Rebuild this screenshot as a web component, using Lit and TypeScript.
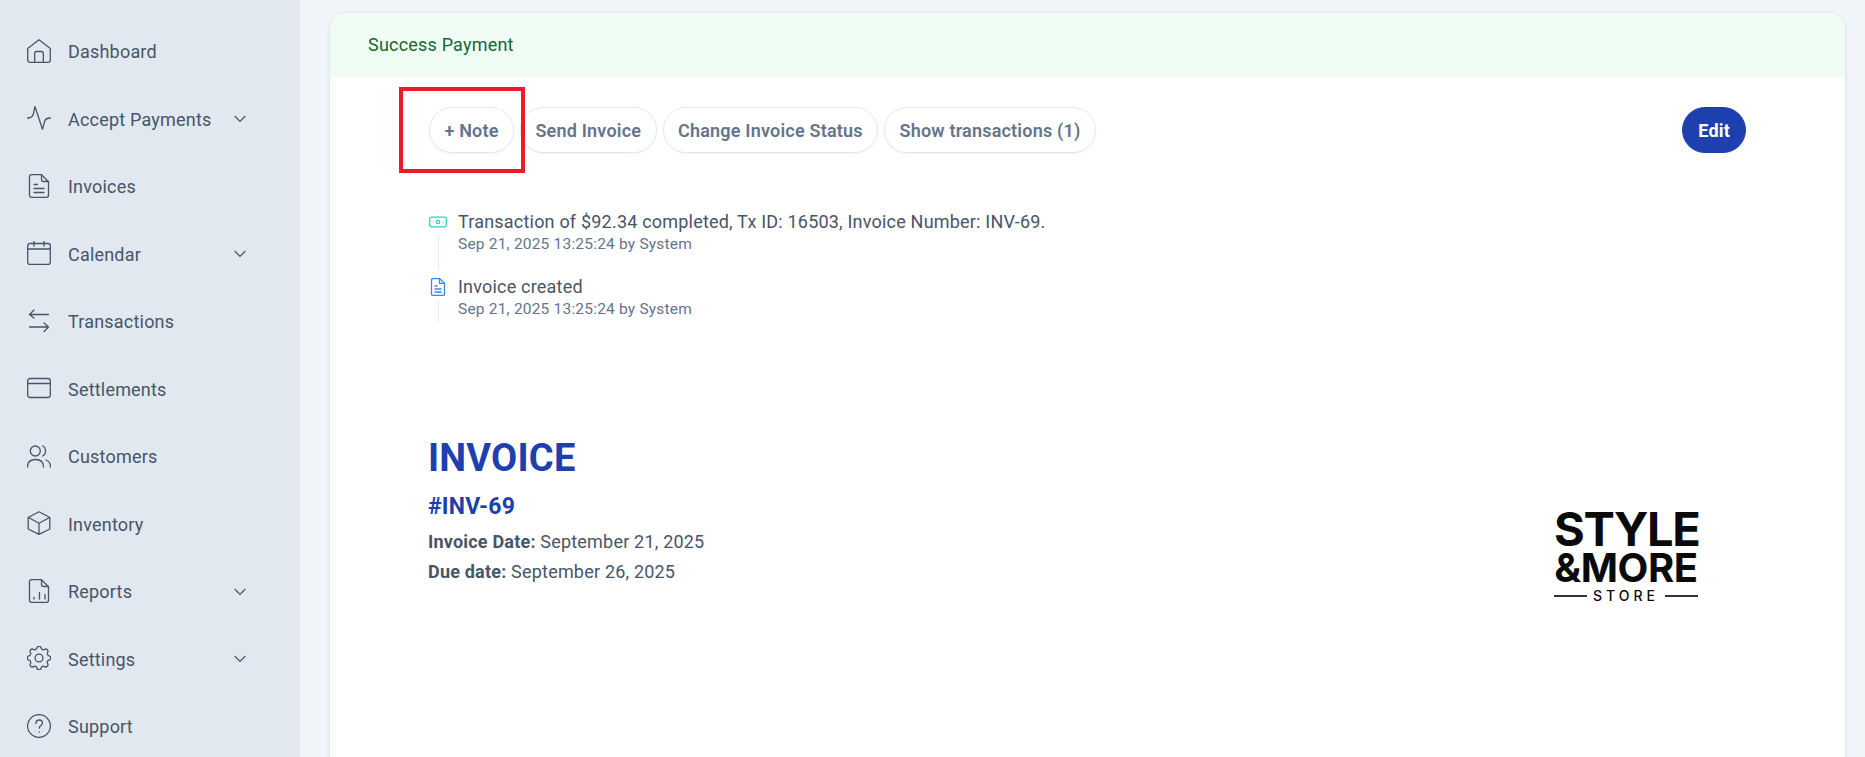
import { LitElement, html, css, svg } from "lit";
import { customElement } from "lit/decorators.js";

const icons: Record<string, unknown> = {
  home: svg`<path d="M.7 9.500 12 .7l11.300 8.800V21a2.300 2.300 0 0 1-2.300 2.300H3A2.300 2.300 0 0 1 .7 21Z"/><path d="M7.700 23.300V14.500a2 2 0 0 1 2-2h4.600a2 2 0 0 1 2 2v8.800"/>`,
  activity: svg`<path d="M.5 12c3 0 5-1 5.800-4L8 .7l7.500 22.600 2.300-8.300c.5-2 1.500-3 5.700-3"/>`,
  doc: svg`<path d="M2.500 2.700A2 2 0 0 1 4.500 .7h10l7 7V21.300a2 2 0 0 1-2 2h-15a2 2 0 0 1-2-2Z"/><path d="M14.500 .7V5.500a2 2 0 0 0 2 2h5M7 10.500h3.500M7 14.500h10M7 18.500h10"/>`,
  calendar: svg`<rect x=".7" y="2.500" width="22.600" height="21" rx="2.200"/><path d="M.7 8h22.600M7 .5v4.500M17 .5v4.500"/>`,
  swap: svg`<path d="M21.500 5.500H2.500M7 1 2.500 5.500 7 9M2.500 18H21.500M17 14l4.500 4-4.500 4.500"/>`,
  card: svg`<rect x=".7" y="2.500" width="22.600" height="19" rx="2.500"/><path d="M.7 7.500h22.600"/>`,
  users: svg`<circle cx="8.300" cy="7" r="5"/><path d="M.5 23c0-5 3-7.500 8-7.500s8 2.500 8 7.500M15.500 2c2 .7 3 2.700 3 5s-1 4.300-3 5M19 16c2.800 1 4.500 3.500 4.500 7"/>`,
  box: svg`<path d="m12 .7 10.800 5.800v11.500L12 23.300 1.200 18V6.500ZM1.500 6.500 12 12.300l10.500-5.800M12 12.300v11"/>`,
  report: svg`<path d="M2.500 2.700A2 2 0 0 1 4.500 .7h10l7 7V21.300a2 2 0 0 1-2 2h-15a2 2 0 0 1-2-2Z"/><path d="M14.500 .7V5.500a2 2 0 0 0 2 2h5M7 20v-1.500M12.500 20v-6.500M18 20v-4.500"/>`,
  gear: svg`<g transform="translate(12 12) scale(1.300) translate(-12 -12)" stroke-width="1"><path d="M10.325 4.317c.426 -1.756 2.924 -1.756 3.35 0a1.724 1.724 0 0 0 2.573 1.066c1.543 -.94 3.31 .826 2.37 2.37a1.724 1.724 0 0 0 1.065 2.572c1.756 .426 1.756 2.924 0 3.35a1.724 1.724 0 0 0 -1.066 2.573c.94 1.543 -.826 3.31 -2.37 2.37a1.724 1.724 0 0 0 -2.572 1.065c-.426 1.756 -2.924 1.756 -3.35 0a1.724 1.724 0 0 0 -2.573 -1.066c-1.543 .94 -3.31 -.826 -2.37 -2.370a1.724 1.724 0 0 0 -1.065 -2.572c-1.756 -.426 -1.756 -2.924 0 -3.350a1.724 1.724 0 0 0 1.066 -2.573c-.94 -1.543 .826 -3.310 2.370 -2.370c1 .608 2.296 .07 2.572 -1.065z"/><circle cx="12" cy="12" r="3"/></g>`,
  help: svg`<circle cx="12" cy="12" r="11.400"/><path d="M8.800 9.500c.2-2 1.600-3.500 3.400-3.500 1.900 0 3.300 1.300 3.300 3 0 2.400-3.300 2.700-3.300 5.200M12.200 17.800v.4"/>`,
};

const items: [string, string, boolean][] = [
  ["home", "Dashboard", false],
  ["activity", "Accept Payments", true],
  ["doc", "Invoices", false],
  ["calendar", "Calendar", true],
  ["swap", "Transactions", false],
  ["card", "Settlements", false],
  ["users", "Customers", false],
  ["box", "Inventory", false],
  ["report", "Reports", true],
  ["gear", "Settings", true],
  ["help", "Support", false],
];

@customElement("app-root")
export class AppRoot extends LitElement {
  static styles = css`
    :host {
      display: flex;
      position: relative;
      height: 757px;
      overflow: hidden;
      background: #f1f5f9;
      font-family: Roboto, "Liberation Sans", sans-serif;
      letter-spacing: 0.2px;
      color: #475569;
    }
    .side {
      flex: 0 0 300px;
      background: #e2e8f0;
      padding-top: 18px;
      box-sizing: border-box;
    }
    .item {
      height: 67.5px;
      display: flex;
      align-items: center;
      padding-left: 27px;
      font-size: 18px;
    }
    .item svg.i {
      width: 24px;
      height: 24px;
      margin-top: -2px;
      fill: none;
      stroke: #475569;
      stroke-width: 1.3;
      stroke-linecap: round;
      stroke-linejoin: round;
      flex: none;
    }
    .item span {
      margin-left: 17px;
      width: 166px;
      white-space: nowrap;
    }
    .chev {
      width: 12px;
      height: 8px;
      fill: none;
      stroke: #475569;
      stroke-width: 1.2;
    }
    .main {
      flex: 1;
      padding: 12px 19px 0 29px;
    }
    .card {
      background: #fff;
      border: 1px solid #e2e8f0;
      border-bottom: none;
      border-radius: 16px 16px 0 0;
      height: 800px;
      box-sizing: border-box;
      box-shadow: 0 1px 3px rgba(15, 23, 42, 0.06);
      overflow: hidden;
    }
    .alert {
      height: 64px;
      background: #f0fdf4;
      color: #166534;
      display: flex;
      align-items: center;
      padding: 0 0 2px 38px;
      font-size: 18px;
      box-sizing: border-box;
    }
    .body {
      padding: 30px 99px 0 99px;
    }
    .tools {
      display: flex;
      align-items: center;
      gap: 6px;
    }
    .btn {
      height: 46px;
      box-sizing: border-box;
      border: 1px solid #e2e8f0;
      border-radius: 23px;
      padding: 0 14.4px;
      display: flex;
      align-items: center;
      font-size: 18px;
      font-weight: 600;
      color: #64748b;
      background: #fff;
      box-shadow: 0 1px 2px rgba(15, 23, 42, 0.05);
      white-space: nowrap;
    }
    .btn.edit {
      margin-left: auto;
      padding: 0 15px;
      background: #1e40af;
      border-color: #1e40af;
      color: #fff;
      font-weight: 700;
    }
    .feed {
      margin-top: 58px;
    }
    .ev {
      height: 65px;
      display: flex;
      gap: 11px;
    }
    .ev .rail {
      width: 18px;
      display: flex;
      flex-direction: column;
      align-items: center;
    }
    .ev .rail svg {
      width: 18px;
      height: 18px;
      flex: none;
      margin-top: 2px;
      fill: none;
      stroke-width: 1.3;
      stroke-linejoin: round;
    }
    .ev .rail i {
      display: block;
      width: 1px;
      height: 35px;
      margin-top: 4px;
      background: #e2e8f0;
    }
    .ev .rail i.short {
      height: 22px;
    }
    .ev .t {
      font-size: 18px;
      line-height: 22px;
      color: #475569;
      white-space: nowrap;
    }
    .ev .s {
      font-size: 15.5px;
      line-height: 22px;
      color: #64748b;
      white-space: nowrap;
    }
    .head {
      margin-top: 94px;
      display: flex;
      justify-content: space-between;
      align-items: flex-start;
    }
    .info {
      margin-left: -1px;
    }
    h1 {
      margin: 0;
      font-size: 38px;
      line-height: 46px;
      font-weight: 700;
      color: #1e40af;
    }
    h2 {
      margin: 12px 0 0;
      font-size: 23px;
      line-height: 28px;
      font-weight: 700;
      color: #1e40af;
    }
    .meta {
      font-size: 18px;
      line-height: 30px;
      color: #475569;
    }
    .meta.first {
      margin-top: 6px;
    }
    .meta b {
      font-weight: 700;
    }
    .logo {
      width: 144px;
      margin: 74px 48px 0 0;
      color: #0a0a0a;
      font-family: Inter, sans-serif;
      text-align: center;
    }
    .logo div {
      white-space: nowrap;
    }
    .l1 {
      font-size: 47px;
      line-height: 40px;
      font-weight: 700;
      letter-spacing: -1.3px;
    }
    .l2 {
      font-size: 40px;
      line-height: 38px;
      font-weight: 700;
      letter-spacing: -0.4px;
      margin-left: -2px;
      margin-right: -2px;
    }
    .l3 {
      display: flex;
      align-items: center;
      gap: 6px;
      font-size: 14px;
      line-height: 18px;
      letter-spacing: 4px;
      font-weight: 500;
    }
    .l3 i {
      flex: 1;
      height: 1.5px;
      background: #333;
    }
    .mark {
      position: absolute;
      left: 399px;
      top: 87px;
      width: 126px;
      height: 86px;
      box-sizing: border-box;
      border: 4px solid #ed1c24;
      pointer-events: none;
    }
  `;

  render() {
    return html`
      <nav class="side">
        ${items.map(
          ([ic, label, more]) => html`<div class="item">
            <svg class="i" viewBox="0 0 24 24">${icons[ic]}</svg>
            <span>${label}</span>
            ${more
              ? html`<svg class="chev" viewBox="0 0 12 8"><path d="M.7 1 6 6.500 11.300 1" /></svg>`
              : ""}
          </div>`,
        )}
      </nav>
      <main class="main">
        <section class="card">
          <div class="alert">Success Payment</div>
          <div class="body">
            <div class="tools">
              <div class="btn">+ Note</div>
              <div class="btn">Send Invoice</div>
              <div class="btn">Change Invoice Status</div>
              <div class="btn">Show transactions (1)</div>
              <div class="btn edit">Edit</div>
            </div>
            <div class="feed">
              <div class="ev">
                <div class="rail">
                  <svg viewBox="0 0 18 18" stroke="#2dd4bf">
                    <rect x=".7" y="4.200" width="16.600" height="9.600" rx="1.500" />
                    <circle cx="9" cy="9" r="1.700" />
                    <path d="M4 9h.5M13.500 9h.5" />
                  </svg>
                  <i></i>
                </div>
                <div>
                  <div class="t">Transaction of $92.34 completed, Tx ID: 16503, Invoice Number: INV-69.</div>
                  <div class="s">Sep 21, 2025 13:25:24 by System</div>
                </div>
              </div>
              <div class="ev">
                <div class="rail">
                  <svg viewBox="0 0 18 18" stroke="#3b82f6">
                    <path d="M2.500 2A1.300 1.300 0 0 1 3.800 .7h7L15.500 5.400V16a1.300 1.300 0 0 1-1.300 1.300H3.800A1.300 1.300 0 0 1 2.500 16Z" />
                    <path d="M10.500 .7v4.700h5M5.500 8h3M5.500 11h7M5.500 14h7" />
                  </svg>
                  <i class="short"></i>
                </div>
                <div>
                  <div class="t">Invoice created</div>
                  <div class="s">Sep 21, 2025 13:25:24 by System</div>
                </div>
              </div>
            </div>
            <div class="head">
              <div class="info">
                <h1>INVOICE</h1>
                <h2>#INV-69</h2>
                <div class="meta first"><b>Invoice Date:</b> September 21, 2025</div>
                <div class="meta"><b>Due date:</b> September 26, 2025</div>
              </div>
              <div class="logo">
                <div class="l1">STYLE</div>
                <div class="l2">&amp;MORE</div>
                <div class="l3"><i></i>STORE<i></i></div>
              </div>
            </div>
          </div>
        </section>
      </main>
      <div class="mark"></div>
    `;
  }
}
